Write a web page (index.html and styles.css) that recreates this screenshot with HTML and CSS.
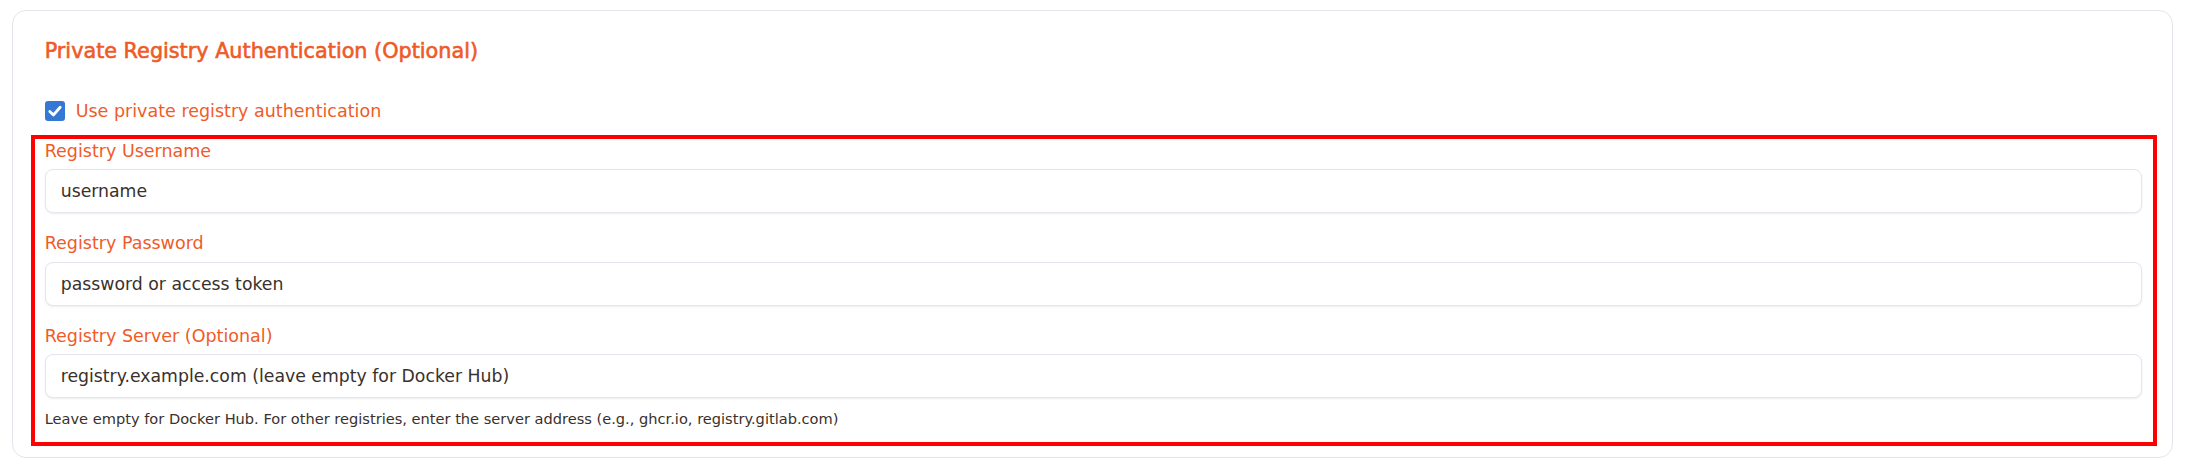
FILE: index.html
```html
<!DOCTYPE html>
<html lang="en">
<head>
<meta charset="utf-8">
<title>Private Registry Authentication</title>
<link rel="stylesheet" href="styles.css">
</head>
<body>
<div class="page">
  <section class="card">
    <h2 class="card-title">Private Registry Authentication (Optional)</h2>
    <label class="check-row">
      <span class="check-box" aria-hidden="true">
        <svg width="20" height="20" viewBox="0 0 20 20"><rect x="0" y="0" width="20" height="20" rx="3" fill="#3478d4"/><path d="M4.8 10.4 L8.4 14 L15.2 6.3" fill="none" stroke="#fff" stroke-width="2.8" stroke-linecap="round" stroke-linejoin="round"/></svg>
      </span>
      <span class="check-label">Use private registry authentication</span>
    </label>
    <div class="fields">
      <div class="field">
        <label class="field-label" for="u">Registry Username</label>
        <input class="field-input" id="u" type="text" placeholder="username">
      </div>
      <div class="field">
        <label class="field-label" for="p">Registry Password</label>
        <input class="field-input" id="p" type="text" placeholder="password or access token">
      </div>
      <div class="field">
        <label class="field-label" for="s">Registry Server (Optional)</label>
        <input class="field-input" id="s" type="text" placeholder="registry.example.com (leave empty for Docker Hub)">
        <p class="field-help">Leave empty for Docker Hub. For other registries, enter the server address (e.g., ghcr.io, registry.gitlab.com)</p>
      </div>
    </div>
  </section>
</div>
</body>
</html>
```

FILE: styles.css
```css
* { box-sizing: border-box; }

html, body {
  margin: 0;
  background: #ffffff;
  font-family: "DejaVu Sans", "Liberation Sans", sans-serif;
}

.page {
  padding: 10px 15px 0 12px;
}

.card {
  border: 1px solid #e3e5ea;
  border-radius: 14px;
  padding: 25.6px 30px 28.2px 31.7px;
  background: #ffffff;
}

.card-title {
  margin: 0;
  font-size: 20.75px;
  line-height: 28px;
  font-weight: normal;
  color: #ef5a27;
  -webkit-text-stroke: 0.6px #ef5a27;
}

.check-row {
  margin-top: 34.4px;
  height: 24px;
  display: flex;
  align-items: center;
  gap: 11px;
}

.check-box {
  width: 20px;
  height: 20px;
  display: flex;
}

.check-label {
  font-size: 17.5px;
  line-height: 24px;
  color: #f05b28;
}

.fields {
  position: relative;
  margin-top: 15.65px;
  display: flex;
  flex-direction: column;
  gap: 17.8px;
}

.fields::after {
  content: "";
  position: absolute;
  top: -3.6px;
  left: -13.5px;
  right: -15px;
  bottom: -17px;
  border: 4px solid #ff0000;
  pointer-events: none;
}

.field {
  display: flex;
  flex-direction: column;
}

.field-label {
  font-size: 17.5px;
  line-height: 24px;
  color: #f05b28;
  margin-bottom: 6.65px;
}

.field-input {
  height: 44px;
  width: 100%;
  border: 1px solid #e3e6ec;
  border-radius: 8px;
  box-shadow: 0 1px 2px rgba(20, 30, 60, 0.08);
  padding: 0 15px;
  font-family: "DejaVu Sans", "Liberation Sans", sans-serif;
  font-size: 17.3px;
  color: #3a302c;
  background: #ffffff;
  outline: none;
}

.field-input::placeholder {
  color: #3a302c;
  opacity: 1;
}

.field-help {
  margin: 10.5px 0 0;
  font-size: 14.6px;
  line-height: 20px;
  color: #3a302c;
}
```
